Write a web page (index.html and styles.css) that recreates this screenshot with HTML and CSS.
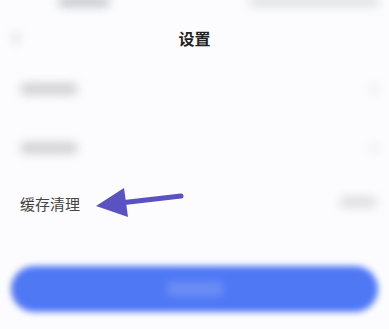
FILE: index.html
```html
<!DOCTYPE html>
<html lang="zh-CN">
<head>
  <meta charset="UTF-8">
  <title>设置</title>
  <meta name="viewport" content="width=device-width, initial-scale=1.0">
  <link rel="stylesheet" href="styles.css">
</head>
<body>
  <div class="screen">
    <div class="status">
      <span class="blob status-left"></span>
      <span class="blob status-right"></span>
    </div>

    <div class="nav">
      <span class="blob back"></span>
      <h1 class="title">设置</h1>
      <span class="nav-spacer"></span>
    </div>

    <div class="list">
      <div class="row">
        <span class="blob label-blur"></span>
        <span class="blob chevron"></span>
      </div>
      <div class="row">
        <span class="blob label-blur"></span>
        <span class="blob chevron"></span>
      </div>
      <div class="row row-cache">
        <span class="label">缓存清理</span>
        <span class="blob value-blur"></span>
      </div>
    </div>

    <div class="btn-wrap">
      <div class="btn"><span class="btn-text"></span></div>
    </div>

    <!-- annotation arrow -->
    <svg class="arrow" width="389" height="329" viewBox="0 0 389 329">
      <line x1="120" y1="203" x2="181" y2="196" stroke="#5a52c2" stroke-width="5" stroke-linecap="round"/>
      <polygon points="96,206 124,188 128,217" fill="#5a52c2"/>
    </svg>
  </div>
</body>
</html>
```

FILE: styles.css
```css
body {
  margin: 0;
  background: #fcfcfe;
  font-family: "Noto Sans CJK SC", "Noto Sans", sans-serif;
  color: #333;
}
.screen {
  position: relative;
  width: 389px;
  height: 329px;
  overflow: hidden;
}
.blob {
  display: block;
  background: #d6d6da;
  border-radius: 8px;
  filter: blur(5px);
}
.status {
  height: 20px;
  display: flex;
  justify-content: space-between;
  align-items: flex-start;
  padding: 0 10px 0 58px;
}
.status-left {
  width: 52px;
  height: 10px;
  margin-top: -3px;
  background: #c6c8cc;
}
.status-right {
  width: 130px;
  height: 10px;
  margin-top: -3px;
  background: #e0e1e4;
}
.nav {
  height: 36px;
  display: flex;
  align-items: center;
  justify-content: space-between;
  padding: 0 12px;
}
.back {
  width: 8px;
  height: 12px;
  background: #e4e4e8;
}
.nav-spacer {
  width: 8px;
}
.title {
  margin: 0;
  font-size: 16px;
  font-weight: bold;
  color: #222;
  line-height: 20px;
}
.list {
  padding: 0 12px 0 20px;
  margin-top: 3px;
}
.row {
  height: 59px;
  display: flex;
  align-items: center;
  justify-content: space-between;
}
.label-blur {
  width: 58px;
  height: 12px;
  background: #d2d2d6;
}
.chevron {
  width: 6px;
  height: 12px;
  background: #ececf0;
}
.row-cache {
  margin-top: -3px;
}
.label {
  font-size: 15px;
  color: #444;
}
.value-blur {
  width: 38px;
  height: 12px;
  margin-top: -4px;
  background: #e0e0e4;
}
.btn-wrap {
  padding: 0 11px;
  margin-top: 33px;
}
.btn {
  height: 46px;
  border-radius: 23px;
  background: #4f78f5;
  filter: blur(3px);
  display: flex;
  align-items: center;
  justify-content: center;
}
.btn-text {
  width: 56px;
  height: 14px;
  border-radius: 4px;
  background: #6d8ff4;
  filter: blur(3px);
}
.arrow {
  position: absolute;
  left: 0;
  top: 0;
}
```
